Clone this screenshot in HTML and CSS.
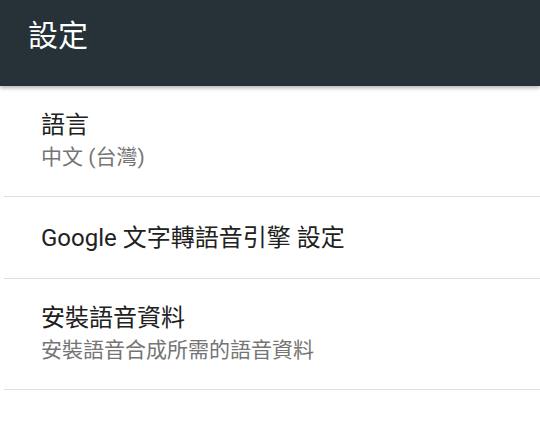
FILE: index.html
```html
<!DOCTYPE html>
<html lang="zh-Hant">
<head>
<meta charset="utf-8">
<link rel="stylesheet" href="styles.css">
</head>
<body>
<header class="appbar"><h1 class="appbar-title">設定</h1></header>
<ul class="prefs">
  <li class="pref pref-two">
    <div class="pref-title">語言</div>
    <div class="pref-summary">中文 (台灣)</div>
  </li>
  <li class="pref pref-one">
    <div class="pref-title">Google 文字轉語音引擎 設定</div>
  </li>
  <li class="pref pref-two">
    <div class="pref-title">安裝語音資料</div>
    <div class="pref-summary">安裝語音合成所需的語音資料</div>
  </li>
</ul>
</body>
</html>
```
FILE: styles.css
```css
html, body {
  margin: 0;
  padding: 0;
  background: #ffffff;
  font-family: Roboto, "Noto Sans CJK TC", sans-serif;
}
.appbar {
  height: 86px;
  box-sizing: border-box;
  background: #263238;
  padding: 21px 0 0 28px;
  box-shadow: 0 2px 4px rgba(0,0,0,0.3);
  position: relative;
  z-index: 1;
}
.appbar-title {
  margin: 0;
  font-size: 30px;
  font-weight: 400;
  color: #ffffff;
  line-height: 30px;
}
.prefs {
  list-style: none;
  margin: 0 0 0 4px;
  padding: 0;
}
.pref {
  border-bottom: 1px solid #e0e0e0;
  padding-left: 37px;
  display: flex;
  flex-direction: column;
  justify-content: center;
}
.pref-two { height: 110px; }
.pref-one { height: 81px; }
.pref-title {
  font-size: 24px;
  line-height: 32px;
  color: #212121;
}
.pref-summary {
  font-size: 21px;
  line-height: 32px;
  color: #757575;
}
```
